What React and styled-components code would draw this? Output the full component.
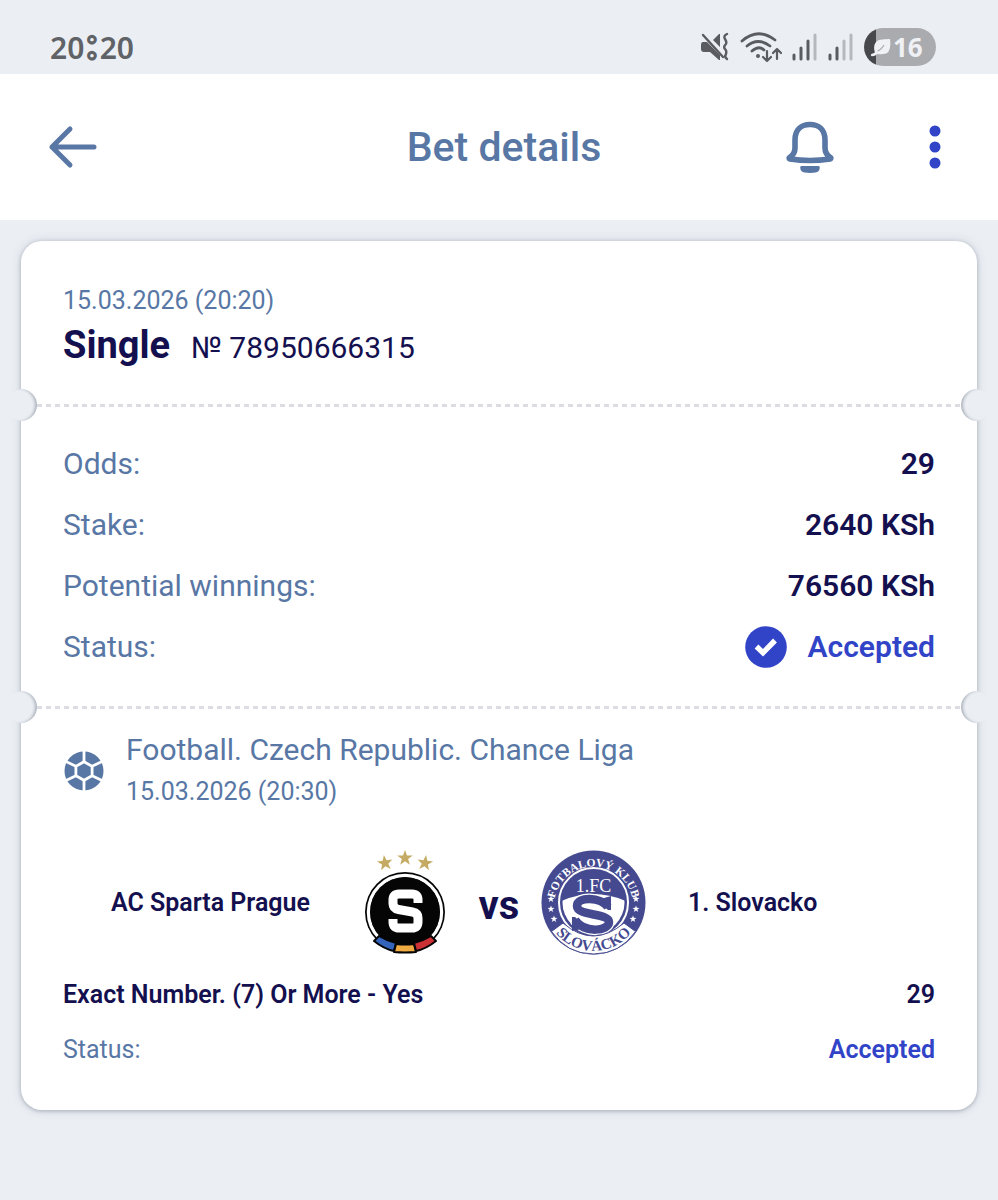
import React from 'react'
import styled, { createGlobalStyle } from 'styled-components'

const GlobalStyle = createGlobalStyle`
  * {
    box-sizing: border-box;
  }

  body {
    margin: 0;
    background: #ebeff4;
    font-family: Roboto, "Liberation Sans", sans-serif;
    color: #14104f;
  }

  p, h1, h2 {
    margin: 0;
  }

  svg {
    display: block;
  }
`

const slate = '#5877a5'
const accent = '#3144c8'
const navy = '#14104f'

const StatusBar = styled.div`
  display: flex;
  align-items: center;
  justify-content: space-between;
  height: 74px;
  padding: 20px 62px 0 50px;
`

const Clock = styled.time`
  display: flex;
  align-items: baseline;
  gap: 2px;
  padding-bottom: 4px;
  font-family: "Noto Sans", sans-serif;
  font-size: 30px;
  line-height: 40px;
  font-weight: 600;
  color: #5f6266;
`

// the stroke over a background-coloured fill leaves the dots hollow
const Colon = styled.span`
  font-family: Lato, sans-serif;
  font-size: 44px;
  font-weight: 700;
  color: #ebeff4;
  -webkit-text-stroke: 3px #5f6266;
`

const SystemIcons = styled.div`
  display: flex;
  align-items: center;
  gap: 10px;
`

const Battery = styled.div`
  display: flex;
  align-items: center;
  gap: 2px;
  width: 72px;
  height: 38px;
  padding-left: 7px;
  border-radius: 19px;
  background: linear-gradient(to right, #47484b 16%, #aaabaf 16%);
  font-family: "Noto Sans", sans-serif;
  font-size: 26px;
  font-weight: 700;
  color: #f0f1f4;
`

const Header = styled.header`
  display: grid;
  grid-template-columns: 1fr auto 1fr;
  align-items: center;
  height: 146px;
  padding: 0 38px 0 48px;
  background: #fff;
`

const Title = styled.h1`
  font-size: 41px;
  line-height: 50px;
  font-weight: 500;
  color: ${slate};
`

const Actions = styled.div`
  display: flex;
  justify-content: flex-end;
  gap: 75px;
`

const IconButton = styled.button`
  display: flex;
  align-items: center;
  justify-content: center;
  justify-self: start;
  width: 50px;
  height: 54px;
  padding: 0;
  border: 0;
  background: none;
  cursor: pointer;
`

const Ticket = styled.main`
  margin: 21px;
  border-radius: 21px;
  background: #fff;
  box-shadow: 0 1px 4px rgba(40, 50, 70, 0.3), 0 0 12px rgba(40, 50, 70, 0.12);
`

const Section = styled.section`
  padding: ${({ $pad }) => $pad};
`

// dashed tear line with a punched hole at both ends
const TearLine = styled.div`
  position: relative;
  height: 3px;
  margin: 0 16px;
  background: repeating-linear-gradient(to right, #dcdde2 0 5px, transparent 5px 9px);

  &::before,
  &::after {
    content: '';
    position: absolute;
    top: -15px;
    width: 32px;
    height: 32px;
    border-radius: 50%;
    background: #ebeff4;
  }

  &::before {
    left: -32px;
    box-shadow: inset -3px 0 3px -1px rgba(40, 50, 70, 0.3);
  }

  &::after {
    right: -32px;
    box-shadow: inset 3px 0 3px -1px rgba(40, 50, 70, 0.3);
  }
`

const DateText = styled.p`
  font-size: 25px;
  line-height: ${({ $line }) => $line || '34px'};
  color: ${slate};
`

const BetHeading = styled.div`
  display: flex;
  align-items: baseline;
  gap: 21px;
  line-height: 54px;
`

const BetType = styled.h2`
  font-size: 38px;
  font-weight: 700;
`

const BetNumber = styled.p`
  font-size: 30px;
`

const Row = styled.div`
  display: flex;
  align-items: center;
  justify-content: space-between;
  height: ${({ $small }) => ($small ? '55px' : '61px')};
  font-size: ${({ $small }) => ($small ? '25px' : '30px')};
`

const Label = styled.span`
  color: ${slate};
`

const Value = styled.span`
  display: flex;
  align-items: center;
  gap: 21px;
  font-weight: 600;
  color: ${({ $accent }) => ($accent ? accent : navy)};
`

const Event = styled.div`
  display: flex;
  align-items: center;
  gap: 21px;
`

const League = styled.h2`
  font-size: 30px;
  line-height: 42px;
  font-weight: 400;
  color: ${slate};
`

const Match = styled.div`
  display: grid;
  grid-template-columns: 1fr 105px 84px 105px 1fr;
  align-items: center;
  margin: 37px 0 12px;
`

const Team = styled.p`
  padding: 0 42px;
  font-size: 25px;
  line-height: 34px;
  font-weight: 600;
  text-align: ${({ $align }) => $align};
`

const Versus = styled.p`
  padding-top: 6px;
  font-size: 40px;
  line-height: 42px;
  font-weight: 700;
  text-align: center;
`

const MuteIcon = () => (
  <svg width='30' height='30' viewBox='0 0 30 30' fill='#5b5c60'>
    <path d='M3 10h4l13 13v5h-1l-9-8H4q-3 0-3-3v-4q0-3 2-3zM13 8l6-6h1v13z' />
    <path d='M3 3l20 22' stroke='#5b5c60' strokeWidth='2.4' strokeLinecap='round' />
    <path d='M27 2q-4 2-2 5t1 5q-3 3-1 5t1 5q-2 3 1 5' fill='none' stroke='#5b5c60' strokeWidth='2.4' strokeLinecap='round' />
  </svg>
)

const WifiIcon = () => (
  <svg width='42' height='32' viewBox='0 0 42 32' fill='none' stroke='#5b5c60' strokeWidth='2.8' strokeLinecap='round' strokeLinejoin='round'>
    <path d='M2 10Q18-4 35 9M7 15q11-9 23 0M12 20q7-6 12-1' />
    <circle cx='18' cy='25' r='2' fill='#5b5c60' stroke='none' />
    <path d='M27 20v10M23 26l4 4 4-4M37 28V18M33 22l4-4 4 4' strokeWidth='2.2' />
  </svg>
)

const SignalIcon = ({ level }) => (
  <svg width='26' height='28' viewBox='0 0 26 28' strokeWidth='3' strokeLinecap='round'>
    {[22, 15, 8, 2].map((top, index) => (
      <path key={top} d={`M${2 + index * 7} ${top}V26`} stroke={index < level ? '#5b5c60' : '#b5b8bc'} />
    ))}
  </svg>
)

const LeafIcon = () => (
  <svg width='20' height='20' viewBox='0 0 20 20'>
    <path d='M4 16Q1 6 8 3q5-1 11-1 2 15-7 15-5 1-8-1z' fill='#f0f1f4' />
    <path d='M5 15q5-2 8-7' stroke='#aaabaf' strokeWidth='1.2' fill='none' />
    <path d='M1 18q3 0 5-3' stroke='#f0f1f4' strokeWidth='2.4' strokeLinecap='round' fill='none' />
  </svg>
)

const BackIcon = () => (
  <svg width='50' height='44' viewBox='0 0 50 44' fill='none' stroke={slate} strokeWidth='5' strokeLinecap='round' strokeLinejoin='round'>
    <path d='M22 4L4 22l18 18M4 22h42' />
  </svg>
)

const BellIcon = () => (
  <svg width='50' height='54' viewBox='0 0 50 54' fill='none' stroke={slate} strokeWidth='5.6' strokeLinecap='round' strokeLinejoin='round'>
    <path d='M10 20C10 10 16 4.500 25 4.500S40 10 40 20v8q0 6 5.500 9.500 1 1-.5 1.500-20 3-40 0-1.500-.5-.5-1.500Q10 34 10 28z' />
    <path d='M16.500 46h17q1.500 0 1.300 1.500-.3 4.500-4.300 5-5.500.8-11 0-4-.5-4.300-5Q15 46 16.500 46z' fill={slate} stroke='none' />
  </svg>
)

const MoreIcon = () => (
  <svg width='12' height='44' viewBox='0 0 12 44' fill={accent}>
    <circle cx='6' cy='6' r='5.500' />
    <circle cx='6' cy='22' r='5.500' />
    <circle cx='6' cy='38' r='5.500' />
  </svg>
)

const CheckIcon = () => (
  <svg width='42' height='42' viewBox='0 0 42 42'>
    <circle cx='21' cy='21' r='20.800' fill={accent} />
    <path d='M11.500 20.500l6.500 6.300L30 14.500' fill='none' stroke='#fff' strokeWidth='5.400' />
  </svg>
)

const BallIcon = () => (
  <svg width='42' height='42' viewBox='0 0 42 42'>
    <circle cx='21' cy='21' r='19.500' fill={slate} />
    <g fill='none' stroke='#fff' strokeWidth='2.800'>
      <path d='M21 11.700l8.100 4.650v9.300L21 30.300l-8.100-4.650v-9.300z' />
      <path d='M21 11.500V0M29.100 16.300l11-5.300M29.100 25.700l11 5.300M21 30.300V42M12.900 25.700l-11 5.300M12.900 16.300l-11-5.300' />
    </g>
  </svg>
)

const star = 'M0-7.500L1.800-2.400 7.200-2.300 2.900 1 4.500 6.200 0 3.100-4.500 6.200-2.900 1-7.200-2.300-1.800-2.400z'

const SpartaCrest = () => (
  <svg width='105' height='105' viewBox='0 0 105 105' role='img' aria-label='AC Sparta Prague'>
    <g fill='#c4aa62'>
      <path d={star} transform='translate(33 13) rotate(-8) scale(1.080)' />
      <path d={star} transform='translate(53 8) scale(1.080)' />
      <path d={star} transform='translate(73 13) rotate(8) scale(1.080)' />
    </g>
    <circle cx='53' cy='62' r='40' fill='#050505' />
    <circle cx='53' cy='62' r='36.500' fill='none' stroke='#fff' strokeWidth='3.500' />
    <circle cx='53' cy='62' r='35' fill='#050505' />
    <g stroke='#050505' strokeWidth='2' strokeLinejoin='round'>
      <path d='M27 86q8 5 17 7l-2 8q-10-2-20-10z' fill='#3564bd' />
      <path d='M44 94q9 1 18 0l2 8q-11 1-22 0z' fill='#f0ab43' />
      <path d='M62 93q9-2 17-7l5 5q-10 8-20 10z' fill='#ca3034' />
    </g>
    <path d='M66 53v-3q0-6-6-6H47q-6 0-6 6v3.500q0 5 5.500 6l14 2.500q5.500 1 5.500 6v4q0 6-6 6H47q-6 0-6-6v-3' fill='none' stroke='#fff' strokeWidth='9' />
  </svg>
)

const SlovackoCrest = () => (
  <svg width='105' height='105' viewBox='0 0 105 105' role='img' aria-label='1. FC Slovacko'>
    <defs>
      <path id='crestTop' d='M13 56A39.500 39.500 0 1 1 92 56' />
      <path id='crestBottom' d='M7 70A49 49 0 0 0 98 70' />
      <clipPath id='crestInner'>
        <circle cx='52.500' cy='52.500' r='31' />
      </clipPath>
    </defs>
    <circle cx='52.500' cy='52.500' r='52' fill='#454a90' />
    <circle cx='52.500' cy='52.500' r='34.500' fill='none' stroke='#fff' strokeWidth='2' />
    <path d='M10.500 81.500L22 73q30 26 61 0l11.500 8.500Q79 104 52.500 104 26 104 10.500 81.500z' fill='#fff' stroke='#454a90' strokeWidth='1' />
    <g clipPath='url(#crestInner)'>
      <path d='M18 52Q52.500 36 87 52v42H18z' fill='#fff' />
    </g>
    <text x='52.500' y='42' textAnchor='middle' fontFamily='Liberation Serif, serif' fontSize='18' fill='#fff'>1.FC</text>
    <g fill='none'>
      <path d='M67 57C60 47 36 46 36 56S68 63 68 72 44 84 34 70' stroke='#fff' strokeWidth='11' />
      <path d='M67 57C60 47 36 46 36 56S68 63 68 72 44 84 34 70' stroke='#454a90' strokeWidth='8.500' />
    </g>
    <path d='M70 46v14h-3L56 50zM31 81V67h3l12 11z' fill='#454a90' />
    <g fontFamily='Liberation Serif, serif' textAnchor='middle'>
      <text fontSize='11.500' fontWeight='700' fill='#fff'>
        <textPath href='#crestTop' startOffset='50%'>FOTBALOVÝ KLUB</textPath>
      </text>
      <text fontSize='15' fontWeight='700' fill='#454a90'>
        <textPath href='#crestBottom' startOffset='50%'>SLOVÁCKO</textPath>
      </text>
    </g>
    <g fill='#fff'>
      <path d={star} transform='translate(10 49) scale(.48)' />
      <path d={star} transform='translate(10 59) scale(.48)' />
      <path d={star} transform='translate(13 69) scale(.48)' />
      <path d={star} transform='translate(95 49) scale(.48)' />
      <path d={star} transform='translate(95 59) scale(.48)' />
      <path d={star} transform='translate(92 69) scale(.48)' />
    </g>
  </svg>
)

const summary = [
  { label: 'Odds:', value: '29' },
  { label: 'Stake:', value: '2640 KSh' },
  { label: 'Potential winnings:', value: '76560 KSh' }
]

export default function App () {
  return (
    <>
      <GlobalStyle />
      <StatusBar>
        <Clock>20<Colon>:</Colon>20</Clock>
        <SystemIcons>
          <MuteIcon />
          <WifiIcon />
          <SignalIcon level={3} />
          <SignalIcon level={2} />
          <Battery><LeafIcon />16</Battery>
        </SystemIcons>
      </StatusBar>
      <Header>
        <IconButton aria-label='Back'><BackIcon /></IconButton>
        <Title>Bet details</Title>
        <Actions>
          <IconButton aria-label='Notifications'><BellIcon /></IconButton>
          <IconButton aria-label='More'><MoreIcon /></IconButton>
        </Actions>
      </Header>
      <Ticket>
        <Section $pad='43px 42px 29px'>
          <DateText>15.03.2026 (20:20)</DateText>
          <BetHeading>
            <BetType>Single</BetType>
            <BetNumber>№ 78950666315</BetNumber>
          </BetHeading>
        </Section>
        <TearLine />
        <Section $pad='26px 42px 29px'>
          {summary.map((item) => (
            <Row key={item.label}>
              <Label>{item.label}</Label>
              <Value>{item.value}</Value>
            </Row>
          ))}
          <Row>
            <Label>Status:</Label>
            <Value $accent><CheckIcon />Accepted</Value>
          </Row>
        </Section>
        <TearLine />
        <Section $pad='20px 42px 33px'>
          <Event>
            <BallIcon />
            <div>
              <League>Football. Czech Republic. Chance Liga</League>
              <DateText $line='42px'>15.03.2026 (20:30)</DateText>
            </div>
          </Event>
          <Match>
            <Team $align='right'>AC Sparta Prague</Team>
            <SpartaCrest />
            <Versus>vs</Versus>
            <SlovackoCrest />
            <Team $align='left'>1. Slovacko</Team>
          </Match>
          <Row $small>
            <Value>Exact Number. (7) Or More - Yes</Value>
            <Value>29</Value>
          </Row>
          <Row $small>
            <Label>Status:</Label>
            <Value $accent>Accepted</Value>
          </Row>
        </Section>
      </Ticket>
    </>
  )
}
